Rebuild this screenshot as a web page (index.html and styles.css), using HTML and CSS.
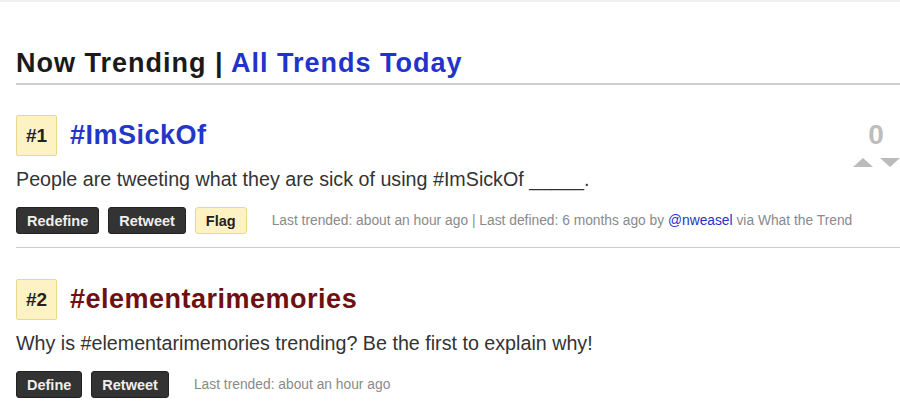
FILE: index.html
```html
<!DOCTYPE html>
<html>
<head>
<meta charset="utf-8">
<link rel="stylesheet" href="styles.css">
</head>
<body>
<div class="page">
  <h1 class="heading">Now Trending | <a class="heading-link" href="#">All Trends Today</a></h1>

  <div class="trend">
    <div class="trend-main">
      <div class="trend-title-row">
        <span class="rank">#1</span>
        <a class="trend-name defined" href="#">#ImSickOf</a>
      </div>
      <p class="trend-desc">People are tweeting what they are sick of using #ImSickOf _____.</p>
      <div class="trend-actions">
        <a class="btn btn-dark" href="#">Redefine</a>
        <a class="btn btn-dark" href="#">Retweet</a>
        <a class="btn btn-flag" href="#">Flag</a>
        <span class="meta">Last trended: about an hour ago | Last defined: 6 months ago by <a class="meta-link" href="#">@nweasel</a> via What the Trend</span>
      </div>
    </div>
    <div class="vote">
      <div class="vote-count">0</div>
      <div class="vote-arrows">
        <span class="arrow arrow-up"></span>
        <span class="arrow arrow-down"></span>
      </div>
    </div>
  </div>

  <div class="trend trend-last">
    <div class="trend-main">
      <div class="trend-title-row">
        <span class="rank">#2</span>
        <a class="trend-name undefined" href="#">#elementarimemories</a>
      </div>
      <p class="trend-desc">Why is #elementarimemories trending? Be the first to explain why!</p>
      <div class="trend-actions">
        <a class="btn btn-dark" href="#">Define</a>
        <a class="btn btn-dark" href="#">Retweet</a>
        <span class="meta">Last trended: about an hour ago</span>
      </div>
    </div>
  </div>
</div>
</body>
</html>
```

FILE: styles.css
```css
* { box-sizing: border-box; }
html, body {
  margin: 0;
  padding: 0;
  background: #fff;
}
body {
  font-family: "Liberation Sans", Arial, Helvetica, sans-serif;
  color: #222;
  border-top: 2px solid #f0f0f0;
  overflow: hidden;
}
.page {
  padding: 0 0 0 16px;
}
.heading {
  margin: 45px 0 0 0;
  font-size: 27px;
  line-height: 32px;
  font-weight: bold;
  color: #1a1a1a;
  padding-bottom: 4px;
  border-bottom: 2px solid #cfcfcf;
  letter-spacing: 1px;
}
.heading-link {
  color: #2233cc;
  text-decoration: none;
}
.trend {
  display: flex;
  justify-content: space-between;
  border-bottom: 1px solid #cccccc;
  padding: 30px 0 13px 0;
}
.trend-last {
  border-bottom: none;
  padding-top: 31px;
}
.trend-main {
  flex: 1;
  min-width: 0;
}
.trend-title-row {
  display: flex;
  align-items: center;
  gap: 13px;
}
.rank {
  display: flex;
  align-items: center;
  justify-content: center;
  width: 41px;
  height: 41px;
  background: #fdf2c4;
  border: 1px solid #e9db86;
  border-radius: 2px;
  font-size: 19px;
  font-weight: bold;
  color: #222;
}
.trend-name {
  font-size: 27px;
  font-weight: bold;
  text-decoration: none;
  letter-spacing: 0.5px;
}
.trend-name.defined { color: #2237c8; }
.trend-name.undefined { color: #6e1010; }
.trend-desc {
  margin: 11px 0 0 0;
  font-size: 19.7px;
  line-height: 24px;
  color: #333;
}
.trend-actions {
  display: flex;
  align-items: center;
  gap: 9px;
  margin-top: 16px;
  white-space: nowrap;
}
.btn {
  display: inline-flex;
  align-items: center;
  height: 27px;
  padding: 0 10px;
  font-size: 14.5px;
  font-weight: bold;
  border-radius: 3px;
  text-decoration: none;
}
.btn-dark {
  background: #333333;
  color: #eeeeee;
  border: 1px solid #222;
}
.btn-flag {
  background: #fdf2c4;
  color: #222;
  border: 1px solid #e9db86;
}
.meta {
  margin-left: 16px;
  font-size: 13.8px;
  color: #8a8a8a;
}
.meta-link {
  color: #2233cc;
  text-decoration: none;
}
.vote {
  width: 48px;
  flex: none;
  display: flex;
  flex-direction: column;
  align-items: center;
  padding-top: 5px;
}
.vote-count {
  font-size: 28px;
  font-weight: bold;
  color: #bdbdbd;
  line-height: 30px;
}
.vote-arrows {
  display: flex;
  gap: 7px;
  margin-top: 8px;
}
.arrow {
  width: 0;
  height: 0;
  border-left: 10px solid transparent;
  border-right: 10px solid transparent;
}
.arrow-up { border-bottom: 9px solid #bbbbbb; }
.arrow-down { border-top: 9px solid #bbbbbb; }
```
